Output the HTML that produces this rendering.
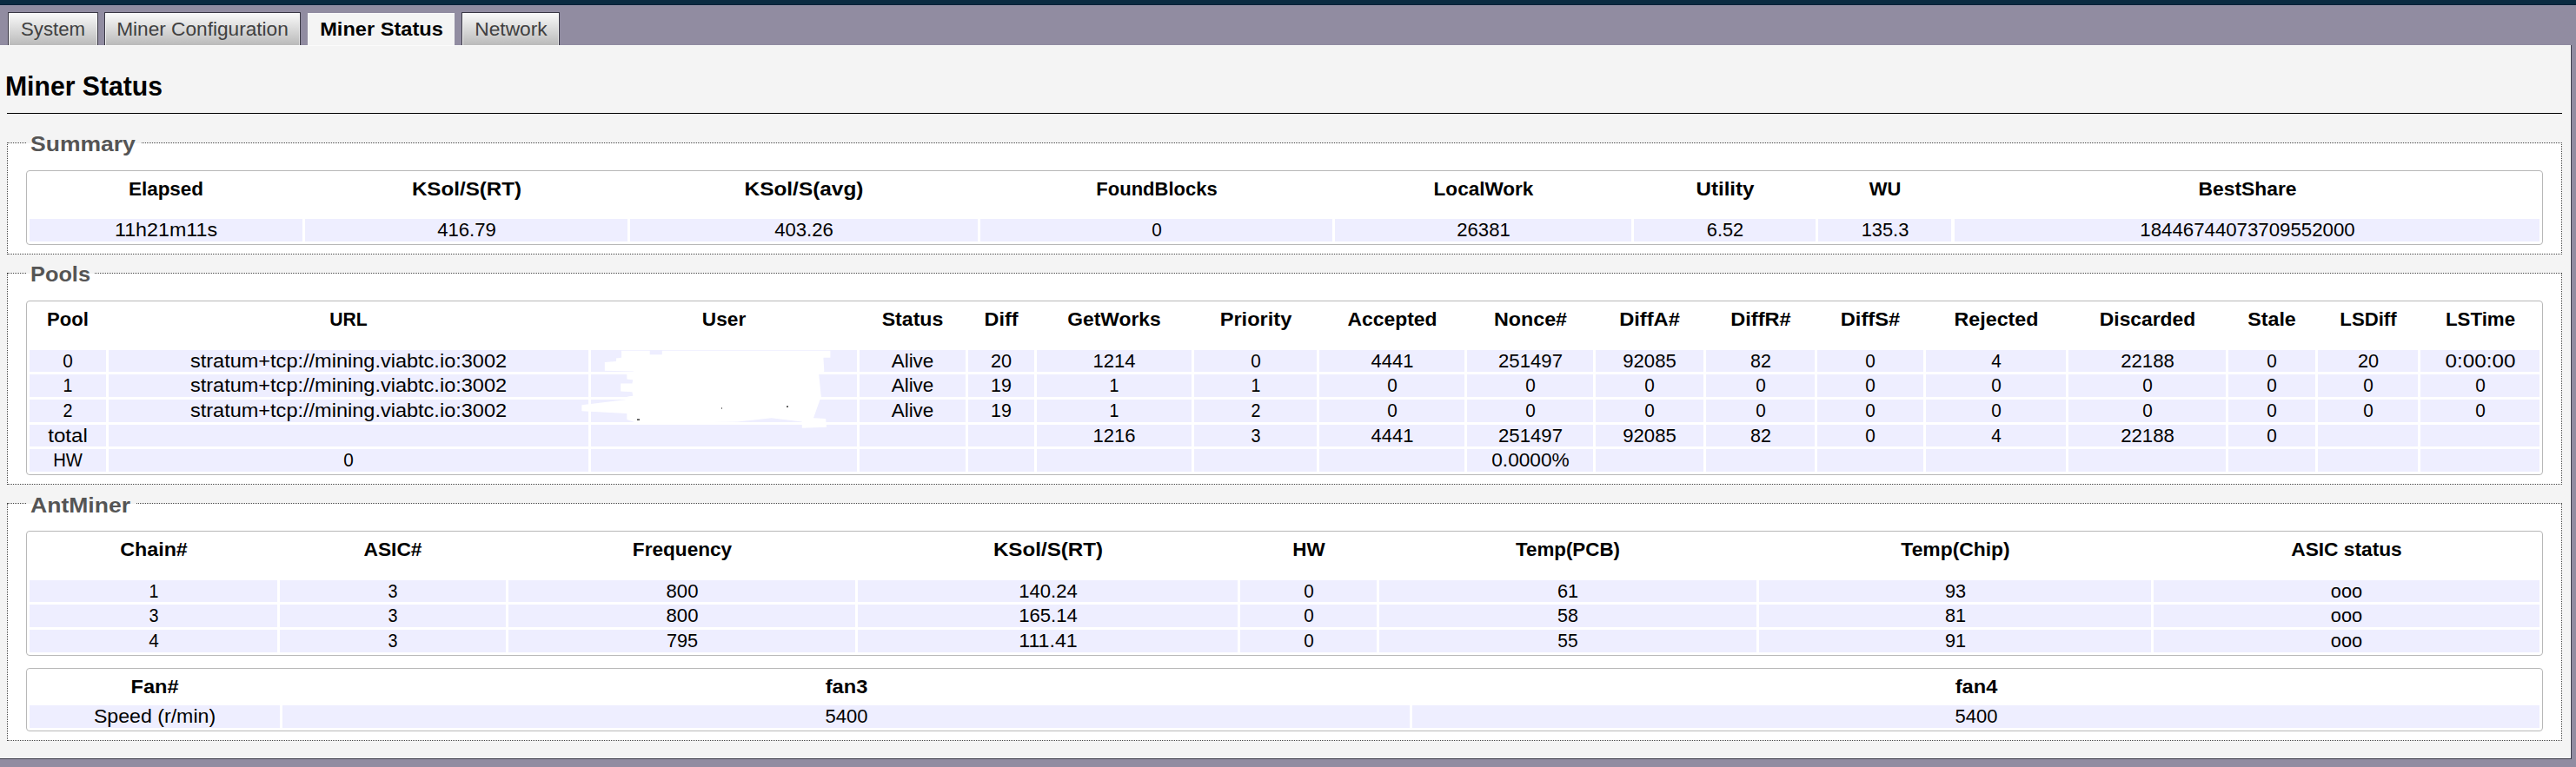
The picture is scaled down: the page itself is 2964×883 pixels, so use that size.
<!DOCTYPE html>
<html><head><meta charset="utf-8"><title>Miner Status</title>
<style>
html,body{margin:0;padding:0;}
body{width:2964px;height:883px;overflow:hidden;position:relative;background:#918ca1;font-family:"Liberation Sans",sans-serif;}
body>div{position:absolute;}
.t{white-space:nowrap;line-height:1;}
</style></head><body>
<div style="left:0px;top:0px;width:2964px;height:5px;background:#0b2b41"></div>
<div style="left:0px;top:5px;width:2964px;height:1px;background:#061f36"></div>
<div style="left:0px;top:6px;width:2964px;height:1px;background:#9894aa"></div>
<div style="left:0px;top:52px;width:2959px;height:822px;background:#f4f4f4;box-sizing:border-box;border-right:1px solid #3a3a48;border-bottom:1px solid #3a3a48"></div>
<div style="left:0px;top:52px;width:2958px;height:1px;background:#fbfbfb"></div>
<div style="left:2957px;top:52px;width:1px;height:821px;background:#fff"></div>
<div style="left:0px;top:872px;width:2958px;height:1px;background:#fff"></div>
<div style="left:9px;top:14px;width:104px;height:38px;background:linear-gradient(#fafafa,#bababa);box-sizing:border-box;border:1px solid #393743;border-bottom:none;box-shadow:inset 1px 1px 0 rgba(255,255,255,0.85),inset -1px 0 0 rgba(255,255,255,0.6)"></div>
<div class="t" style="left:61.00px;top:23.09px;font-size:21.16px;font-weight:normal;color:#404040;transform:translateX(-50%) scaleX(1.0476)">System</div>
<div style="left:120px;top:14px;width:226px;height:38px;background:linear-gradient(#fafafa,#bababa);box-sizing:border-box;border:1px solid #393743;border-bottom:none;box-shadow:inset 1px 1px 0 rgba(255,255,255,0.85),inset -1px 0 0 rgba(255,255,255,0.6)"></div>
<div class="t" style="left:233.00px;top:23.09px;font-size:21.16px;font-weight:normal;color:#404040;transform:translateX(-50%) scaleX(1.0702)">Miner Configuration</div>
<div style="left:354px;top:15px;width:169px;height:37px;background:#f4f4f4;border-top:1px solid #fafafa;box-sizing:border-box"></div>
<div class="t" style="left:438.50px;top:23.09px;font-size:21.16px;font-weight:bold;color:#000;transform:translateX(-50%) scaleX(1.1155)">Miner Status</div>
<div style="left:531px;top:14px;width:113px;height:38px;background:linear-gradient(#fafafa,#bababa);box-sizing:border-box;border:1px solid #393743;border-bottom:none;box-shadow:inset 1px 1px 0 rgba(255,255,255,0.85),inset -1px 0 0 rgba(255,255,255,0.6)"></div>
<div class="t" style="left:587.50px;top:23.09px;font-size:21.16px;font-weight:normal;color:#404040;transform:translateX(-50%) scaleX(1.0759)">Network</div>
<div class="t" style="left:6.31px;top:84.00px;font-size:31.9px;font-weight:bold;color:#000;transform-origin:0 50%;transform:scaleX(0.9456)">Miner Status</div>
<div style="left:8px;top:130px;width:2940px;height:1px;background:#000"></div>
<div style="left:8px;top:164px;width:2940px;height:129px;background:#fff;box-sizing:border-box;border:1px dotted #444"></div>
<div style="left:30px;top:164px;width:133px;height:1px;background:#f4f4f4"></div>
<div class="t" style="left:35.28px;top:153.70px;font-size:24.33px;font-weight:bold;color:#555;transform-origin:0 50%;transform:scaleX(1.0897)">Summary</div>
<div style="left:8px;top:314px;width:2940px;height:244px;background:#fff;box-sizing:border-box;border:1px dotted #444"></div>
<div style="left:30px;top:314px;width:79px;height:1px;background:#f4f4f4"></div>
<div class="t" style="left:35.34px;top:303.70px;font-size:24.33px;font-weight:bold;color:#555;transform-origin:0 50%;transform:scaleX(1.0416)">Pools</div>
<div style="left:8px;top:579px;width:2940px;height:274px;background:#fff;box-sizing:border-box;border:1px dotted #444"></div>
<div style="left:30px;top:579px;width:127px;height:1px;background:#f4f4f4"></div>
<div class="t" style="left:35.35px;top:569.70px;font-size:24.33px;font-weight:bold;color:#555;transform-origin:0 50%;transform:scaleX(1.0909)">AntMiner</div>
<div style="left:30px;top:196px;width:2896px;height:86px;background:#fff;box-sizing:border-box;border:1px solid #b8b8b8;border-radius:4px"></div>
<div style="left:34px;top:252px;width:314px;height:26px;background:#eeeeff"></div>
<div style="left:351px;top:252px;width:371px;height:26px;background:#eeeeff"></div>
<div style="left:725px;top:252px;width:400px;height:26px;background:#eeeeff"></div>
<div style="left:1128px;top:252px;width:405px;height:26px;background:#eeeeff"></div>
<div style="left:1536px;top:252px;width:341px;height:26px;background:#eeeeff"></div>
<div style="left:1880px;top:252px;width:209px;height:26px;background:#eeeeff"></div>
<div style="left:2092px;top:252px;width:153px;height:26px;background:#eeeeff"></div>
<div style="left:2249px;top:252px;width:673px;height:26px;background:#eeeeff"></div>
<div class="t" style="left:191.00px;top:207.09px;font-size:21.16px;font-weight:bold;color:#000;transform:translateX(-50%) scaleX(1.0614)">Elapsed</div>
<div class="t" style="left:191.00px;top:254.09px;font-size:21.16px;font-weight:normal;color:#000;transform:translateX(-50%) scaleX(1.0998)">11h21m11s</div>
<div class="t" style="left:536.50px;top:207.09px;font-size:21.16px;font-weight:bold;color:#000;transform:translateX(-50%) scaleX(1.1417)">KSol/S(RT)</div>
<div class="t" style="left:536.50px;top:254.09px;font-size:21.16px;font-weight:normal;color:#000;transform:translateX(-50%) scaleX(1.0458)">416.79</div>
<div class="t" style="left:925.00px;top:207.09px;font-size:21.16px;font-weight:bold;color:#000;transform:translateX(-50%) scaleX(1.1527)">KSol/S(avg)</div>
<div class="t" style="left:925.00px;top:254.09px;font-size:21.16px;font-weight:normal;color:#000;transform:translateX(-50%) scaleX(1.0456)">403.26</div>
<div class="t" style="left:1330.50px;top:207.09px;font-size:21.16px;font-weight:bold;color:#000;transform:translateX(-50%) scaleX(1.0395)">FoundBlocks</div>
<div class="t" style="left:1330.50px;top:254.09px;font-size:21.16px;font-weight:normal;color:#000;transform:translateX(-50%) scaleX(0.9800)">0</div>
<div class="t" style="left:1706.50px;top:207.09px;font-size:21.16px;font-weight:bold;color:#000;transform:translateX(-50%) scaleX(1.0653)">LocalWork</div>
<div class="t" style="left:1706.50px;top:254.09px;font-size:21.16px;font-weight:normal;color:#000;transform:translateX(-50%) scaleX(1.0448)">26381</div>
<div class="t" style="left:1984.50px;top:207.09px;font-size:21.16px;font-weight:bold;color:#000;transform:translateX(-50%) scaleX(1.1419)">Utility</div>
<div class="t" style="left:1984.50px;top:254.09px;font-size:21.16px;font-weight:normal;color:#000;transform:translateX(-50%) scaleX(1.0299)">6.52</div>
<div class="t" style="left:2168.50px;top:207.09px;font-size:21.16px;font-weight:bold;color:#000;transform:translateX(-50%) scaleX(1.0376)">WU</div>
<div class="t" style="left:2168.50px;top:254.09px;font-size:21.16px;font-weight:normal;color:#000;transform:translateX(-50%) scaleX(1.0331)">135.3</div>
<div class="t" style="left:2585.50px;top:207.09px;font-size:21.16px;font-weight:bold;color:#000;transform:translateX(-50%) scaleX(1.0804)">BestShare</div>
<div class="t" style="left:2585.50px;top:254.09px;font-size:21.16px;font-weight:normal;color:#000;transform:translateX(-50%) scaleX(1.0515)">18446744073709552000</div>
<div style="left:30px;top:346px;width:2896px;height:201px;background:#fff;box-sizing:border-box;border:1px solid #b8b8b8;border-radius:4px"></div>
<div style="left:34px;top:403px;width:88px;height:25px;background:#eeeeff"></div>
<div style="left:125px;top:403px;width:552px;height:25px;background:#eeeeff"></div>
<div style="left:680px;top:403px;width:306px;height:25px;background:#eeeeff"></div>
<div style="left:989px;top:403px;width:122px;height:25px;background:#eeeeff"></div>
<div style="left:1114px;top:403px;width:76px;height:25px;background:#eeeeff"></div>
<div style="left:1193px;top:403px;width:178px;height:25px;background:#eeeeff"></div>
<div style="left:1374px;top:403px;width:141px;height:25px;background:#eeeeff"></div>
<div style="left:1518px;top:403px;width:167px;height:25px;background:#eeeeff"></div>
<div style="left:1688px;top:403px;width:145px;height:25px;background:#eeeeff"></div>
<div style="left:1836px;top:403px;width:124px;height:25px;background:#eeeeff"></div>
<div style="left:1963px;top:403px;width:125px;height:25px;background:#eeeeff"></div>
<div style="left:2091px;top:403px;width:122px;height:25px;background:#eeeeff"></div>
<div style="left:2216px;top:403px;width:161px;height:25px;background:#eeeeff"></div>
<div style="left:2380px;top:403px;width:181px;height:25px;background:#eeeeff"></div>
<div style="left:2564px;top:403px;width:100px;height:25px;background:#eeeeff"></div>
<div style="left:2667px;top:403px;width:115px;height:25px;background:#eeeeff"></div>
<div style="left:2785px;top:403px;width:137px;height:25px;background:#eeeeff"></div>
<div style="left:34px;top:431px;width:88px;height:26px;background:#eeeeff"></div>
<div style="left:125px;top:431px;width:552px;height:26px;background:#eeeeff"></div>
<div style="left:680px;top:431px;width:306px;height:26px;background:#eeeeff"></div>
<div style="left:989px;top:431px;width:122px;height:26px;background:#eeeeff"></div>
<div style="left:1114px;top:431px;width:76px;height:26px;background:#eeeeff"></div>
<div style="left:1193px;top:431px;width:178px;height:26px;background:#eeeeff"></div>
<div style="left:1374px;top:431px;width:141px;height:26px;background:#eeeeff"></div>
<div style="left:1518px;top:431px;width:167px;height:26px;background:#eeeeff"></div>
<div style="left:1688px;top:431px;width:145px;height:26px;background:#eeeeff"></div>
<div style="left:1836px;top:431px;width:124px;height:26px;background:#eeeeff"></div>
<div style="left:1963px;top:431px;width:125px;height:26px;background:#eeeeff"></div>
<div style="left:2091px;top:431px;width:122px;height:26px;background:#eeeeff"></div>
<div style="left:2216px;top:431px;width:161px;height:26px;background:#eeeeff"></div>
<div style="left:2380px;top:431px;width:181px;height:26px;background:#eeeeff"></div>
<div style="left:2564px;top:431px;width:100px;height:26px;background:#eeeeff"></div>
<div style="left:2667px;top:431px;width:115px;height:26px;background:#eeeeff"></div>
<div style="left:2785px;top:431px;width:137px;height:26px;background:#eeeeff"></div>
<div style="left:34px;top:460px;width:88px;height:26px;background:#eeeeff"></div>
<div style="left:125px;top:460px;width:552px;height:26px;background:#eeeeff"></div>
<div style="left:680px;top:460px;width:306px;height:26px;background:#eeeeff"></div>
<div style="left:989px;top:460px;width:122px;height:26px;background:#eeeeff"></div>
<div style="left:1114px;top:460px;width:76px;height:26px;background:#eeeeff"></div>
<div style="left:1193px;top:460px;width:178px;height:26px;background:#eeeeff"></div>
<div style="left:1374px;top:460px;width:141px;height:26px;background:#eeeeff"></div>
<div style="left:1518px;top:460px;width:167px;height:26px;background:#eeeeff"></div>
<div style="left:1688px;top:460px;width:145px;height:26px;background:#eeeeff"></div>
<div style="left:1836px;top:460px;width:124px;height:26px;background:#eeeeff"></div>
<div style="left:1963px;top:460px;width:125px;height:26px;background:#eeeeff"></div>
<div style="left:2091px;top:460px;width:122px;height:26px;background:#eeeeff"></div>
<div style="left:2216px;top:460px;width:161px;height:26px;background:#eeeeff"></div>
<div style="left:2380px;top:460px;width:181px;height:26px;background:#eeeeff"></div>
<div style="left:2564px;top:460px;width:100px;height:26px;background:#eeeeff"></div>
<div style="left:2667px;top:460px;width:115px;height:26px;background:#eeeeff"></div>
<div style="left:2785px;top:460px;width:137px;height:26px;background:#eeeeff"></div>
<div style="left:34px;top:489px;width:88px;height:25px;background:#eeeeff"></div>
<div style="left:125px;top:489px;width:552px;height:25px;background:#eeeeff"></div>
<div style="left:680px;top:489px;width:306px;height:25px;background:#eeeeff"></div>
<div style="left:989px;top:489px;width:122px;height:25px;background:#eeeeff"></div>
<div style="left:1114px;top:489px;width:76px;height:25px;background:#eeeeff"></div>
<div style="left:1193px;top:489px;width:178px;height:25px;background:#eeeeff"></div>
<div style="left:1374px;top:489px;width:141px;height:25px;background:#eeeeff"></div>
<div style="left:1518px;top:489px;width:167px;height:25px;background:#eeeeff"></div>
<div style="left:1688px;top:489px;width:145px;height:25px;background:#eeeeff"></div>
<div style="left:1836px;top:489px;width:124px;height:25px;background:#eeeeff"></div>
<div style="left:1963px;top:489px;width:125px;height:25px;background:#eeeeff"></div>
<div style="left:2091px;top:489px;width:122px;height:25px;background:#eeeeff"></div>
<div style="left:2216px;top:489px;width:161px;height:25px;background:#eeeeff"></div>
<div style="left:2380px;top:489px;width:181px;height:25px;background:#eeeeff"></div>
<div style="left:2564px;top:489px;width:100px;height:25px;background:#eeeeff"></div>
<div style="left:2667px;top:489px;width:115px;height:25px;background:#eeeeff"></div>
<div style="left:2785px;top:489px;width:137px;height:25px;background:#eeeeff"></div>
<div style="left:34px;top:517px;width:88px;height:26px;background:#eeeeff"></div>
<div style="left:125px;top:517px;width:552px;height:26px;background:#eeeeff"></div>
<div style="left:680px;top:517px;width:306px;height:26px;background:#eeeeff"></div>
<div style="left:989px;top:517px;width:122px;height:26px;background:#eeeeff"></div>
<div style="left:1114px;top:517px;width:76px;height:26px;background:#eeeeff"></div>
<div style="left:1193px;top:517px;width:178px;height:26px;background:#eeeeff"></div>
<div style="left:1374px;top:517px;width:141px;height:26px;background:#eeeeff"></div>
<div style="left:1518px;top:517px;width:167px;height:26px;background:#eeeeff"></div>
<div style="left:1688px;top:517px;width:145px;height:26px;background:#eeeeff"></div>
<div style="left:1836px;top:517px;width:124px;height:26px;background:#eeeeff"></div>
<div style="left:1963px;top:517px;width:125px;height:26px;background:#eeeeff"></div>
<div style="left:2091px;top:517px;width:122px;height:26px;background:#eeeeff"></div>
<div style="left:2216px;top:517px;width:161px;height:26px;background:#eeeeff"></div>
<div style="left:2380px;top:517px;width:181px;height:26px;background:#eeeeff"></div>
<div style="left:2564px;top:517px;width:100px;height:26px;background:#eeeeff"></div>
<div style="left:2667px;top:517px;width:115px;height:26px;background:#eeeeff"></div>
<div style="left:2785px;top:517px;width:137px;height:26px;background:#eeeeff"></div>
<div class="t" style="left:78.00px;top:357.09px;font-size:21.16px;font-weight:bold;color:#000;transform:translateX(-50%) scaleX(1.0427)">Pool</div>
<div class="t" style="left:401.00px;top:357.09px;font-size:21.16px;font-weight:bold;color:#000;transform:translateX(-50%) scaleX(0.9977)">URL</div>
<div class="t" style="left:833.00px;top:357.09px;font-size:21.16px;font-weight:bold;color:#000;transform:translateX(-50%) scaleX(1.0715)">User</div>
<div class="t" style="left:1050.00px;top:357.09px;font-size:21.16px;font-weight:bold;color:#000;transform:translateX(-50%) scaleX(1.0919)">Status</div>
<div class="t" style="left:1152.00px;top:357.09px;font-size:21.16px;font-weight:bold;color:#000;transform:translateX(-50%) scaleX(1.1025)">Diff</div>
<div class="t" style="left:1282.00px;top:357.09px;font-size:21.16px;font-weight:bold;color:#000;transform:translateX(-50%) scaleX(1.0775)">GetWorks</div>
<div class="t" style="left:1444.50px;top:357.09px;font-size:21.16px;font-weight:bold;color:#000;transform:translateX(-50%) scaleX(1.1152)">Priority</div>
<div class="t" style="left:1601.50px;top:357.09px;font-size:21.16px;font-weight:bold;color:#000;transform:translateX(-50%) scaleX(1.0825)">Accepted</div>
<div class="t" style="left:1760.50px;top:357.09px;font-size:21.16px;font-weight:bold;color:#000;transform:translateX(-50%) scaleX(1.1013)">Nonce#</div>
<div class="t" style="left:1898.00px;top:357.09px;font-size:21.16px;font-weight:bold;color:#000;transform:translateX(-50%) scaleX(1.1177)">DiffA#</div>
<div class="t" style="left:2025.50px;top:357.09px;font-size:21.16px;font-weight:bold;color:#000;transform:translateX(-50%) scaleX(1.1136)">DiffR#</div>
<div class="t" style="left:2152.00px;top:357.09px;font-size:21.16px;font-weight:bold;color:#000;transform:translateX(-50%) scaleX(1.1206)">DiffS#</div>
<div class="t" style="left:2296.50px;top:357.09px;font-size:21.16px;font-weight:bold;color:#000;transform:translateX(-50%) scaleX(1.0978)">Rejected</div>
<div class="t" style="left:2470.50px;top:357.09px;font-size:21.16px;font-weight:bold;color:#000;transform:translateX(-50%) scaleX(1.0785)">Discarded</div>
<div class="t" style="left:2614.00px;top:357.09px;font-size:21.16px;font-weight:bold;color:#000;transform:translateX(-50%) scaleX(1.0994)">Stale</div>
<div class="t" style="left:2724.50px;top:357.09px;font-size:21.16px;font-weight:bold;color:#000;transform:translateX(-50%) scaleX(1.0483)">LSDiff</div>
<div class="t" style="left:2853.50px;top:357.09px;font-size:21.16px;font-weight:bold;color:#000;transform:translateX(-50%) scaleX(1.0531)">LSTime</div>
<div class="t" style="left:78.00px;top:404.59px;font-size:21.16px;font-weight:normal;color:#000;transform:translateX(-50%) scaleX(0.9800)">0</div>
<div class="t" style="left:401.00px;top:404.59px;font-size:21.16px;font-weight:normal;color:#000;transform:translateX(-50%) scaleX(1.1120)">stratum+tcp://mining.viabtc.io:3002</div>
<div class="t" style="left:1050.00px;top:404.59px;font-size:21.16px;font-weight:normal;color:#000;transform:translateX(-50%) scaleX(1.0611)">Alive</div>
<div class="t" style="left:1152.00px;top:404.59px;font-size:21.16px;font-weight:normal;color:#000;transform:translateX(-50%) scaleX(1.0251)">20</div>
<div class="t" style="left:1282.00px;top:404.59px;font-size:21.16px;font-weight:normal;color:#000;transform:translateX(-50%) scaleX(1.0399)">1214</div>
<div class="t" style="left:1444.50px;top:404.59px;font-size:21.16px;font-weight:normal;color:#000;transform:translateX(-50%) scaleX(0.9800)">0</div>
<div class="t" style="left:1601.50px;top:404.59px;font-size:21.16px;font-weight:normal;color:#000;transform:translateX(-50%) scaleX(1.0392)">4441</div>
<div class="t" style="left:1760.50px;top:404.59px;font-size:21.16px;font-weight:normal;color:#000;transform:translateX(-50%) scaleX(1.0480)">251497</div>
<div class="t" style="left:1898.00px;top:404.59px;font-size:21.16px;font-weight:normal;color:#000;transform:translateX(-50%) scaleX(1.0445)">92085</div>
<div class="t" style="left:2025.50px;top:404.59px;font-size:21.16px;font-weight:normal;color:#000;transform:translateX(-50%) scaleX(1.0142)">82</div>
<div class="t" style="left:2152.00px;top:404.59px;font-size:21.16px;font-weight:normal;color:#000;transform:translateX(-50%) scaleX(0.9800)">0</div>
<div class="t" style="left:2296.50px;top:404.59px;font-size:21.16px;font-weight:normal;color:#000;transform:translateX(-50%) scaleX(0.9800)">4</div>
<div class="t" style="left:2470.50px;top:404.59px;font-size:21.16px;font-weight:normal;color:#000;transform:translateX(-50%) scaleX(1.0488)">22188</div>
<div class="t" style="left:2614.00px;top:404.59px;font-size:21.16px;font-weight:normal;color:#000;transform:translateX(-50%) scaleX(0.9800)">0</div>
<div class="t" style="left:2724.50px;top:404.59px;font-size:21.16px;font-weight:normal;color:#000;transform:translateX(-50%) scaleX(1.0251)">20</div>
<div class="t" style="left:2853.50px;top:404.59px;font-size:21.16px;font-weight:normal;color:#000;transform:translateX(-50%) scaleX(1.1449)">0:00:00</div>
<div class="t" style="left:78.00px;top:433.09px;font-size:21.16px;font-weight:normal;color:#000;transform:translateX(-50%) scaleX(0.9270)">1</div>
<div class="t" style="left:401.00px;top:433.09px;font-size:21.16px;font-weight:normal;color:#000;transform:translateX(-50%) scaleX(1.1120)">stratum+tcp://mining.viabtc.io:3002</div>
<div class="t" style="left:1050.00px;top:433.09px;font-size:21.16px;font-weight:normal;color:#000;transform:translateX(-50%) scaleX(1.0611)">Alive</div>
<div class="t" style="left:1152.00px;top:433.09px;font-size:21.16px;font-weight:normal;color:#000;transform:translateX(-50%) scaleX(1.0150)">19</div>
<div class="t" style="left:1282.00px;top:433.09px;font-size:21.16px;font-weight:normal;color:#000;transform:translateX(-50%) scaleX(0.9270)">1</div>
<div class="t" style="left:1444.50px;top:433.09px;font-size:21.16px;font-weight:normal;color:#000;transform:translateX(-50%) scaleX(0.9270)">1</div>
<div class="t" style="left:1601.50px;top:433.09px;font-size:21.16px;font-weight:normal;color:#000;transform:translateX(-50%) scaleX(0.9800)">0</div>
<div class="t" style="left:1760.50px;top:433.09px;font-size:21.16px;font-weight:normal;color:#000;transform:translateX(-50%) scaleX(0.9800)">0</div>
<div class="t" style="left:1898.00px;top:433.09px;font-size:21.16px;font-weight:normal;color:#000;transform:translateX(-50%) scaleX(0.9800)">0</div>
<div class="t" style="left:2025.50px;top:433.09px;font-size:21.16px;font-weight:normal;color:#000;transform:translateX(-50%) scaleX(0.9800)">0</div>
<div class="t" style="left:2152.00px;top:433.09px;font-size:21.16px;font-weight:normal;color:#000;transform:translateX(-50%) scaleX(0.9800)">0</div>
<div class="t" style="left:2296.50px;top:433.09px;font-size:21.16px;font-weight:normal;color:#000;transform:translateX(-50%) scaleX(0.9800)">0</div>
<div class="t" style="left:2470.50px;top:433.09px;font-size:21.16px;font-weight:normal;color:#000;transform:translateX(-50%) scaleX(0.9800)">0</div>
<div class="t" style="left:2614.00px;top:433.09px;font-size:21.16px;font-weight:normal;color:#000;transform:translateX(-50%) scaleX(0.9800)">0</div>
<div class="t" style="left:2724.50px;top:433.09px;font-size:21.16px;font-weight:normal;color:#000;transform:translateX(-50%) scaleX(0.9800)">0</div>
<div class="t" style="left:2853.50px;top:433.09px;font-size:21.16px;font-weight:normal;color:#000;transform:translateX(-50%) scaleX(0.9800)">0</div>
<div class="t" style="left:78.00px;top:462.09px;font-size:21.16px;font-weight:normal;color:#000;transform:translateX(-50%) scaleX(0.9297)">2</div>
<div class="t" style="left:401.00px;top:462.09px;font-size:21.16px;font-weight:normal;color:#000;transform:translateX(-50%) scaleX(1.1120)">stratum+tcp://mining.viabtc.io:3002</div>
<div class="t" style="left:1050.00px;top:462.09px;font-size:21.16px;font-weight:normal;color:#000;transform:translateX(-50%) scaleX(1.0611)">Alive</div>
<div class="t" style="left:1152.00px;top:462.09px;font-size:21.16px;font-weight:normal;color:#000;transform:translateX(-50%) scaleX(1.0150)">19</div>
<div class="t" style="left:1282.00px;top:462.09px;font-size:21.16px;font-weight:normal;color:#000;transform:translateX(-50%) scaleX(0.9270)">1</div>
<div class="t" style="left:1444.50px;top:462.09px;font-size:21.16px;font-weight:normal;color:#000;transform:translateX(-50%) scaleX(0.9297)">2</div>
<div class="t" style="left:1601.50px;top:462.09px;font-size:21.16px;font-weight:normal;color:#000;transform:translateX(-50%) scaleX(0.9800)">0</div>
<div class="t" style="left:1760.50px;top:462.09px;font-size:21.16px;font-weight:normal;color:#000;transform:translateX(-50%) scaleX(0.9800)">0</div>
<div class="t" style="left:1898.00px;top:462.09px;font-size:21.16px;font-weight:normal;color:#000;transform:translateX(-50%) scaleX(0.9800)">0</div>
<div class="t" style="left:2025.50px;top:462.09px;font-size:21.16px;font-weight:normal;color:#000;transform:translateX(-50%) scaleX(0.9800)">0</div>
<div class="t" style="left:2152.00px;top:462.09px;font-size:21.16px;font-weight:normal;color:#000;transform:translateX(-50%) scaleX(0.9800)">0</div>
<div class="t" style="left:2296.50px;top:462.09px;font-size:21.16px;font-weight:normal;color:#000;transform:translateX(-50%) scaleX(0.9800)">0</div>
<div class="t" style="left:2470.50px;top:462.09px;font-size:21.16px;font-weight:normal;color:#000;transform:translateX(-50%) scaleX(0.9800)">0</div>
<div class="t" style="left:2614.00px;top:462.09px;font-size:21.16px;font-weight:normal;color:#000;transform:translateX(-50%) scaleX(0.9800)">0</div>
<div class="t" style="left:2724.50px;top:462.09px;font-size:21.16px;font-weight:normal;color:#000;transform:translateX(-50%) scaleX(0.9800)">0</div>
<div class="t" style="left:2853.50px;top:462.09px;font-size:21.16px;font-weight:normal;color:#000;transform:translateX(-50%) scaleX(0.9800)">0</div>
<div class="t" style="left:78.00px;top:490.59px;font-size:21.16px;font-weight:normal;color:#000;transform:translateX(-50%) scaleX(1.1373)">total</div>
<div class="t" style="left:1282.00px;top:490.59px;font-size:21.16px;font-weight:normal;color:#000;transform:translateX(-50%) scaleX(1.0402)">1216</div>
<div class="t" style="left:1444.50px;top:490.59px;font-size:21.16px;font-weight:normal;color:#000;transform:translateX(-50%) scaleX(0.9322)">3</div>
<div class="t" style="left:1601.50px;top:490.59px;font-size:21.16px;font-weight:normal;color:#000;transform:translateX(-50%) scaleX(1.0392)">4441</div>
<div class="t" style="left:1760.50px;top:490.59px;font-size:21.16px;font-weight:normal;color:#000;transform:translateX(-50%) scaleX(1.0480)">251497</div>
<div class="t" style="left:1898.00px;top:490.59px;font-size:21.16px;font-weight:normal;color:#000;transform:translateX(-50%) scaleX(1.0445)">92085</div>
<div class="t" style="left:2025.50px;top:490.59px;font-size:21.16px;font-weight:normal;color:#000;transform:translateX(-50%) scaleX(1.0142)">82</div>
<div class="t" style="left:2152.00px;top:490.59px;font-size:21.16px;font-weight:normal;color:#000;transform:translateX(-50%) scaleX(0.9800)">0</div>
<div class="t" style="left:2296.50px;top:490.59px;font-size:21.16px;font-weight:normal;color:#000;transform:translateX(-50%) scaleX(0.9800)">4</div>
<div class="t" style="left:2470.50px;top:490.59px;font-size:21.16px;font-weight:normal;color:#000;transform:translateX(-50%) scaleX(1.0488)">22188</div>
<div class="t" style="left:2614.00px;top:490.59px;font-size:21.16px;font-weight:normal;color:#000;transform:translateX(-50%) scaleX(0.9800)">0</div>
<div class="t" style="left:78.00px;top:519.09px;font-size:21.16px;font-weight:normal;color:#000;transform:translateX(-50%) scaleX(0.9552)">HW</div>
<div class="t" style="left:401.00px;top:519.09px;font-size:21.16px;font-weight:normal;color:#000;transform:translateX(-50%) scaleX(0.9800)">0</div>
<div class="t" style="left:1760.50px;top:519.09px;font-size:21.16px;font-weight:normal;color:#000;transform:translateX(-50%) scaleX(1.0723)">0.0000%</div>
<svg style="position:absolute;left:0;top:0" width="2964" height="883"><polygon fill="#fff" points="715.1,403.8 747.7,403.8 747.7,408.2 761.8,408.2 761.8,403.8 955.4,403.8 955.4,411.7 947.4,411.7 948.3,427.6 942.2,431.1 944.8,456.6 936.0,481.2 950.1,482.1 951.0,491.8 922.8,492.7 922.8,485.6 887.6,481.2 848.9,485.6 734.5,487.4 721.3,483.0 721.3,476.0 669.4,473.3 669.4,466.3 721.3,460.1 722.2,456.6 728.3,455.7 727.4,451.3 714.2,450.4 714.2,441.6 727.4,441.6 728.3,437.2 721.3,436.4 721.3,431.1 727.4,430.2 729.2,427.6 695.8,426.7 695.8,417.0 709.0,416.1 709.0,412.6 715.1,411.7"/><rect x="733" y="482.5" width="3" height="1.2" fill="#000"/><rect x="830" y="469.5" width="1" height="1" fill="#000"/><rect x="905" y="467.5" width="2" height="1.2" fill="#000"/></svg>
<div style="left:30px;top:611px;width:2896px;height:144px;background:#fff;box-sizing:border-box;border:1px solid #b8b8b8;border-radius:4px"></div>
<div style="left:34px;top:668px;width:285px;height:25px;background:#eeeeff"></div>
<div style="left:322px;top:668px;width:260px;height:25px;background:#eeeeff"></div>
<div style="left:585px;top:668px;width:399px;height:25px;background:#eeeeff"></div>
<div style="left:987px;top:668px;width:437px;height:25px;background:#eeeeff"></div>
<div style="left:1427px;top:668px;width:157px;height:25px;background:#eeeeff"></div>
<div style="left:1587px;top:668px;width:434px;height:25px;background:#eeeeff"></div>
<div style="left:2024px;top:668px;width:451px;height:25px;background:#eeeeff"></div>
<div style="left:2478px;top:668px;width:444px;height:25px;background:#eeeeff"></div>
<div style="left:34px;top:696px;width:285px;height:26px;background:#eeeeff"></div>
<div style="left:322px;top:696px;width:260px;height:26px;background:#eeeeff"></div>
<div style="left:585px;top:696px;width:399px;height:26px;background:#eeeeff"></div>
<div style="left:987px;top:696px;width:437px;height:26px;background:#eeeeff"></div>
<div style="left:1427px;top:696px;width:157px;height:26px;background:#eeeeff"></div>
<div style="left:1587px;top:696px;width:434px;height:26px;background:#eeeeff"></div>
<div style="left:2024px;top:696px;width:451px;height:26px;background:#eeeeff"></div>
<div style="left:2478px;top:696px;width:444px;height:26px;background:#eeeeff"></div>
<div style="left:34px;top:725px;width:285px;height:26px;background:#eeeeff"></div>
<div style="left:322px;top:725px;width:260px;height:26px;background:#eeeeff"></div>
<div style="left:585px;top:725px;width:399px;height:26px;background:#eeeeff"></div>
<div style="left:987px;top:725px;width:437px;height:26px;background:#eeeeff"></div>
<div style="left:1427px;top:725px;width:157px;height:26px;background:#eeeeff"></div>
<div style="left:1587px;top:725px;width:434px;height:26px;background:#eeeeff"></div>
<div style="left:2024px;top:725px;width:451px;height:26px;background:#eeeeff"></div>
<div style="left:2478px;top:725px;width:444px;height:26px;background:#eeeeff"></div>
<div class="t" style="left:176.50px;top:622.09px;font-size:21.16px;font-weight:bold;color:#000;transform:translateX(-50%) scaleX(1.0999)">Chain#</div>
<div class="t" style="left:452.00px;top:622.09px;font-size:21.16px;font-weight:bold;color:#000;transform:translateX(-50%) scaleX(1.0756)">ASIC#</div>
<div class="t" style="left:784.50px;top:622.09px;font-size:21.16px;font-weight:bold;color:#000;transform:translateX(-50%) scaleX(1.0682)">Frequency</div>
<div class="t" style="left:1205.50px;top:622.09px;font-size:21.16px;font-weight:bold;color:#000;transform:translateX(-50%) scaleX(1.1417)">KSol/S(RT)</div>
<div class="t" style="left:1505.50px;top:622.09px;font-size:21.16px;font-weight:bold;color:#000;transform:translateX(-50%) scaleX(1.0599)">HW</div>
<div class="t" style="left:1804.00px;top:622.09px;font-size:21.16px;font-weight:bold;color:#000;transform:translateX(-50%) scaleX(1.0564)">Temp(PCB)</div>
<div class="t" style="left:2249.50px;top:622.09px;font-size:21.16px;font-weight:bold;color:#000;transform:translateX(-50%) scaleX(1.0803)">Temp(Chip)</div>
<div class="t" style="left:2700.00px;top:622.09px;font-size:21.16px;font-weight:bold;color:#000;transform:translateX(-50%) scaleX(1.0738)">ASIC status</div>
<div class="t" style="left:176.50px;top:669.59px;font-size:21.16px;font-weight:normal;color:#000;transform:translateX(-50%) scaleX(0.9270)">1</div>
<div class="t" style="left:452.00px;top:669.59px;font-size:21.16px;font-weight:normal;color:#000;transform:translateX(-50%) scaleX(0.9322)">3</div>
<div class="t" style="left:784.50px;top:669.59px;font-size:21.16px;font-weight:normal;color:#000;transform:translateX(-50%) scaleX(1.0458)">800</div>
<div class="t" style="left:1205.50px;top:669.59px;font-size:21.16px;font-weight:normal;color:#000;transform:translateX(-50%) scaleX(1.0425)">140.24</div>
<div class="t" style="left:1505.50px;top:669.59px;font-size:21.16px;font-weight:normal;color:#000;transform:translateX(-50%) scaleX(0.9800)">0</div>
<div class="t" style="left:1804.00px;top:669.59px;font-size:21.16px;font-weight:normal;color:#000;transform:translateX(-50%) scaleX(1.0256)">61</div>
<div class="t" style="left:2249.50px;top:669.59px;font-size:21.16px;font-weight:normal;color:#000;transform:translateX(-50%) scaleX(1.0251)">93</div>
<div class="t" style="left:2700.00px;top:669.59px;font-size:21.16px;font-weight:normal;color:#000;transform:translateX(-50%) scaleX(1.0296)">ooo</div>
<div class="t" style="left:176.50px;top:698.09px;font-size:21.16px;font-weight:normal;color:#000;transform:translateX(-50%) scaleX(0.9322)">3</div>
<div class="t" style="left:452.00px;top:698.09px;font-size:21.16px;font-weight:normal;color:#000;transform:translateX(-50%) scaleX(0.9322)">3</div>
<div class="t" style="left:784.50px;top:698.09px;font-size:21.16px;font-weight:normal;color:#000;transform:translateX(-50%) scaleX(1.0458)">800</div>
<div class="t" style="left:1205.50px;top:698.09px;font-size:21.16px;font-weight:normal;color:#000;transform:translateX(-50%) scaleX(1.0425)">165.14</div>
<div class="t" style="left:1505.50px;top:698.09px;font-size:21.16px;font-weight:normal;color:#000;transform:translateX(-50%) scaleX(0.9800)">0</div>
<div class="t" style="left:1804.00px;top:698.09px;font-size:21.16px;font-weight:normal;color:#000;transform:translateX(-50%) scaleX(1.0134)">58</div>
<div class="t" style="left:2249.50px;top:698.09px;font-size:21.16px;font-weight:normal;color:#000;transform:translateX(-50%) scaleX(1.0256)">81</div>
<div class="t" style="left:2700.00px;top:698.09px;font-size:21.16px;font-weight:normal;color:#000;transform:translateX(-50%) scaleX(1.0296)">ooo</div>
<div class="t" style="left:176.50px;top:727.09px;font-size:21.16px;font-weight:normal;color:#000;transform:translateX(-50%) scaleX(0.9800)">4</div>
<div class="t" style="left:452.00px;top:727.09px;font-size:21.16px;font-weight:normal;color:#000;transform:translateX(-50%) scaleX(0.9322)">3</div>
<div class="t" style="left:784.50px;top:727.09px;font-size:21.16px;font-weight:normal;color:#000;transform:translateX(-50%) scaleX(1.0239)">795</div>
<div class="t" style="left:1205.50px;top:727.09px;font-size:21.16px;font-weight:normal;color:#000;transform:translateX(-50%) scaleX(1.0963)">111.41</div>
<div class="t" style="left:1505.50px;top:727.09px;font-size:21.16px;font-weight:normal;color:#000;transform:translateX(-50%) scaleX(0.9800)">0</div>
<div class="t" style="left:1804.00px;top:727.09px;font-size:21.16px;font-weight:normal;color:#000;transform:translateX(-50%) scaleX(0.9911)">55</div>
<div class="t" style="left:2249.50px;top:727.09px;font-size:21.16px;font-weight:normal;color:#000;transform:translateX(-50%) scaleX(1.0256)">91</div>
<div class="t" style="left:2700.00px;top:727.09px;font-size:21.16px;font-weight:normal;color:#000;transform:translateX(-50%) scaleX(1.0296)">ooo</div>
<div style="left:30px;top:769px;width:2896px;height:73px;background:#fff;box-sizing:border-box;border:1px solid #b8b8b8;border-radius:4px"></div>
<div style="left:34px;top:812px;width:288px;height:26px;background:#eeeeff"></div>
<div style="left:325px;top:812px;width:1297px;height:26px;background:#eeeeff"></div>
<div style="left:1625px;top:812px;width:1297px;height:26px;background:#eeeeff"></div>
<div class="t" style="left:178.00px;top:780.09px;font-size:21.16px;font-weight:bold;color:#000;transform:translateX(-50%) scaleX(1.1141)">Fan#</div>
<div class="t" style="left:178.00px;top:814.09px;font-size:21.16px;font-weight:normal;color:#000;transform:translateX(-50%) scaleX(1.0942)">Speed (r/min)</div>
<div class="t" style="left:973.50px;top:780.09px;font-size:21.16px;font-weight:bold;color:#000;transform:translateX(-50%) scaleX(1.1184)">fan3</div>
<div class="t" style="left:973.50px;top:814.09px;font-size:21.16px;font-weight:normal;color:#000;transform:translateX(-50%) scaleX(1.0392)">5400</div>
<div class="t" style="left:2273.50px;top:780.09px;font-size:21.16px;font-weight:bold;color:#000;transform:translateX(-50%) scaleX(1.1160)">fan4</div>
<div class="t" style="left:2273.50px;top:814.09px;font-size:21.16px;font-weight:normal;color:#000;transform:translateX(-50%) scaleX(1.0392)">5400</div>
</body></html>
